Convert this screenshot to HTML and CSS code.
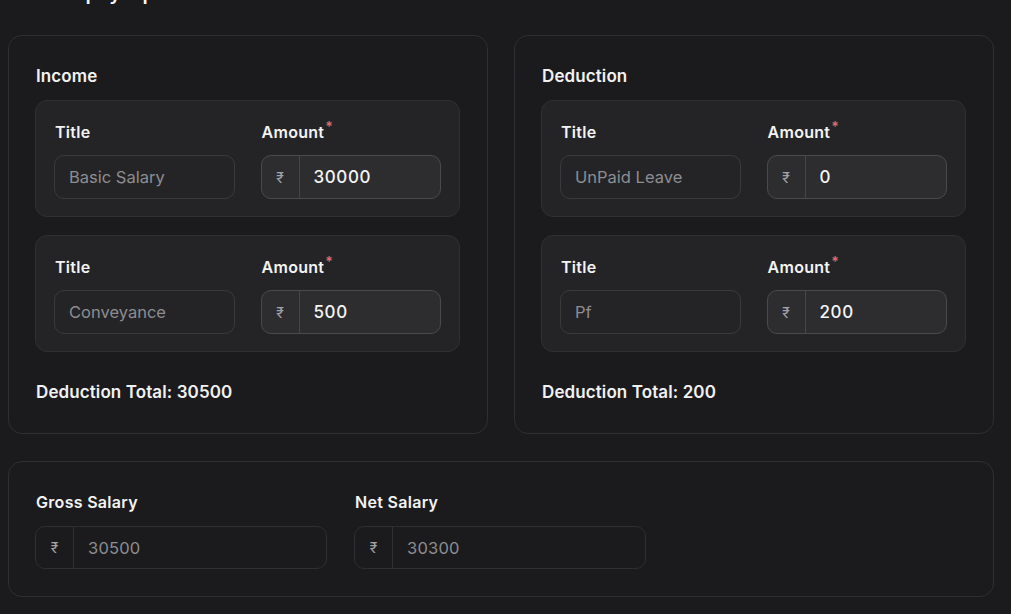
FILE: index.html
```html
<!DOCTYPE html>
<html lang="en">
<head>
<meta charset="utf-8">
<title>Create payslip</title>
<link rel="stylesheet" href="styles.css">
</head>
<body>
<div class="page">
  <h1 class="page-title">Create payslip</h1>
  <div class="columns">
    <section class="card">
      <h2 class="card-title">Income</h2>
      <div class="item">
        <div class="field">
          <label class="label">Title</label>
          <div class="input plain"><span class="muted">Basic Salary</span></div>
        </div>
        <div class="field">
          <label class="label">Amount<sup class="req">*</sup></label>
          <div class="input money"><span class="prefix">₹</span><span class="value">30000</span></div>
        </div>
      </div>
      <div class="item">
        <div class="field">
          <label class="label">Title</label>
          <div class="input plain"><span class="muted">Conveyance</span></div>
        </div>
        <div class="field">
          <label class="label">Amount<sup class="req">*</sup></label>
          <div class="input money"><span class="prefix">₹</span><span class="value">500</span></div>
        </div>
      </div>
      <p class="total">Deduction Total: 30500</p>
    </section>
    <section class="card">
      <h2 class="card-title">Deduction</h2>
      <div class="item">
        <div class="field">
          <label class="label">Title</label>
          <div class="input plain"><span class="muted">UnPaid Leave</span></div>
        </div>
        <div class="field">
          <label class="label">Amount<sup class="req">*</sup></label>
          <div class="input money"><span class="prefix">₹</span><span class="value">0</span></div>
        </div>
      </div>
      <div class="item">
        <div class="field">
          <label class="label">Title</label>
          <div class="input plain"><span class="muted">Pf</span></div>
        </div>
        <div class="field">
          <label class="label">Amount<sup class="req">*</sup></label>
          <div class="input money"><span class="prefix">₹</span><span class="value">200</span></div>
        </div>
      </div>
      <p class="total">Deduction Total: 200</p>
    </section>
  </div>
  <section class="card summary">
    <div class="field">
      <label class="label">Gross Salary</label>
      <div class="input readonly"><span class="prefix">₹</span><span class="muted">30500</span></div>
    </div>
    <div class="field">
      <label class="label">Net Salary</label>
      <div class="input readonly"><span class="prefix">₹</span><span class="muted">30300</span></div>
    </div>
  </section>
</div>
</body>
</html>
```

FILE: styles.css
```css
* { box-sizing: border-box; }
html, body {
  margin: 0;
  background: #1b1b1d;
}
body {
  font-family: Inter, "Noto Sans", sans-serif;
  color: #f1f1f2;
  overflow: hidden;
}
.page {
  padding: 0 17px 0 8px;
  margin-top: -19px;
}
.page-title {
  margin: 0 0 30px 8px;
  font-size: 20px;
  line-height: 24px;
  font-weight: 600;
  color: #f5f5f5;
}
.columns {
  display: grid;
  grid-template-columns: 1fr 1fr;
  gap: 26px;
}
.card {
  border: 1px solid #2f2f32;
  border-radius: 14px;
  padding: 28px 27px 29px 26px;
  background: #1b1b1d;
}
.card-title {
  margin: 0 0 12px 1px;
  font-size: 17px;
  line-height: 24px;
  font-weight: 600;
  letter-spacing: 0.1px;
}
.item {
  display: grid;
  grid-template-columns: 1fr 1fr;
  column-gap: 26px;
  background: #242426;
  border: 1px solid #303033;
  border-radius: 12px;
  padding: 20px 18px 17px 18px;
  margin-bottom: 18px;
}
.item + .item { margin-bottom: 0; }
.field {
  display: flex;
  flex-direction: column;
  gap: 12px;
}
.label {
  font-size: 16px;
  line-height: 22px;
  font-weight: 600;
  color: #f3f3f3;
  letter-spacing: 0.3px;
  padding-left: 1px;
}
.req {
  color: #e06a6a;
  font-size: 14px;
  line-height: 0;
  vertical-align: 6px;
  margin-left: 1px;
}
.input {
  height: 44px;
  border-radius: 10px;
  display: flex;
  align-items: center;
  font-size: 16.5px;
}
.plain {
  border: 1px solid #3a3a3d;
  background: #242426;
  padding: 0 14px;
}
.money {
  border: 1px solid #4a4a4d;
  background: #2d2d30;
}
.readonly {
  border: 1px solid #2f2f32;
  background: #1b1b1d;
  height: 43px;
}
.prefix {
  width: 38px;
  flex: none;
  align-self: stretch;
  display: flex;
  align-items: center;
  justify-content: center;
  border-right: 1px solid #46464a;
  color: #a3a3a7;
  font-size: 14px;
}
.readonly .prefix { border-right-color: #303033; }
.value {
  padding-left: 14px;
  color: #f4f4f5;
  font-weight: 500;
  font-size: 17px;
  letter-spacing: 0.6px;
}
.muted {
  color: #8d8d92;
}
.readonly .muted { padding-left: 14px; letter-spacing: 0.2px; }
.total {
  margin: 28px 0 0 1px;
  font-size: 17px;
  line-height: 24px;
  font-weight: 600;
  letter-spacing: 0.1px;
}
.summary {
  margin-top: 27px;
  display: grid;
  grid-template-columns: 292px 292px;
  column-gap: 27px;
  padding: 29px 27px 27px 26px;
}
.summary .field { gap: 13px; }
```
